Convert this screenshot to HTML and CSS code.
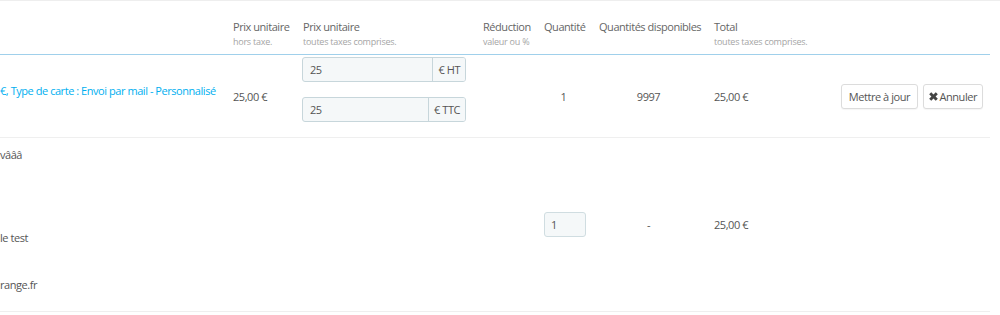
FILE: index.html
```html
<!DOCTYPE html>
<html lang="fr">
<head>
<meta charset="utf-8">
<title>Commande</title>
<link rel="stylesheet" href="styles.css">
</head>
<body>
<div class="panel">
  <table class="orders">
    <colgroup>
      <col class="c-name"><col class="c-ht"><col class="c-ttc"><col class="c-red">
      <col class="c-qty"><col class="c-stock"><col class="c-total"><col class="c-act">
    </colgroup>
    <thead>
      <tr>
        <th class="first"></th>
        <th>Prix unitaire<small>hors taxe.</small></th>
        <th>Prix unitaire<small>toutes taxes comprises.</small></th>
        <th>Réduction<small>valeur ou %</small></th>
        <th>Quantité<small>&nbsp;</small></th>
        <th>Quantités disponibles<small>&nbsp;</small></th>
        <th>Total<small>toutes taxes comprises.</small></th>
        <th></th>
      </tr>
    </thead>
    <tbody>
      <tr class="edit-row">
        <td class="first name"><a href="#">€, Type de carte : Envoi par mail - Personnalisé</a></td>
        <td>25,00 €</td>
        <td class="prices">
          <div class="input-group"><input type="text" value="25"><span class="addon">€ HT</span></div>
          <div class="input-group"><input type="text" value="25"><span class="addon">€ TTC</span></div>
        </td>
        <td></td>
        <td class="center">1</td>
        <td class="center">9997</td>
        <td>25,00 €</td>
        <td class="actions">
          <div class="btns">
            <button class="btn">Mettre à jour</button>
            <button class="btn btn-cancel"><svg class="ico" width="9" height="9" viewBox="0 0 10 10"><path d="M0.2 2.5L2.5 0.2 5 2.7 7.5 0.2 9.8 2.5 7.3 5 9.8 7.5 7.5 9.8 5 7.3 2.5 9.8 0.2 7.5 2.7 5z" fill="#444"/></svg>Annuler</button>
          </div>
        </td>
      </tr>
      <tr class="custom-row">
        <td class="first custom">
          <div class="line l1">vâââ</div>
          <div class="line l2">le test</div>
          <div class="line l3">range.fr</div>
        </td>
        <td></td>
        <td></td>
        <td></td>
        <td class="center"><input class="qty" type="text" value="1"></td>
        <td class="center">-</td>
        <td>25,00 €</td>
        <td></td>
      </tr>
    </tbody>
  </table>
</div>
</body>
</html>
```

FILE: styles.css
```css
html, body {
  margin: 0;
  padding: 0;
  background: #fff;
}

body {
  font-family: "Open Sans", "Liberation Sans", sans-serif;
  font-size: 11px;
  letter-spacing: -0.45px;
  line-height: 17px;
  color: #555;
  overflow: hidden;
}

.panel {
  border-top: 1px solid #eeeeee;
}

.orders {
  width: 990px;
  table-layout: fixed;
  border-collapse: separate;
  border-spacing: 0;
}

.c-name { width: 225px; }
.c-ht { width: 70px; }
.c-ttc { width: 180px; }
.c-red { width: 61px; }
.c-qty { width: 55px; }
.c-stock { width: 115px; }
.c-total { width: 124px; }
.c-act { width: 160px; }

.orders th {
  padding: 17px 8px 5px;
  vertical-align: bottom;
  text-align: left;
  font-weight: normal;
  color: #666;
  white-space: nowrap;
  border-bottom: 1px solid #a0d0eb;
}

.orders th small {
  display: block;
  font-size: 9px;
  letter-spacing: -0.25px;
  line-height: 14px;
  color: #a5a5a5;
}

.orders td {
  padding: 0 8px;
  vertical-align: middle;
  border-bottom: 1px solid #efefef;
  white-space: nowrap;
}

.orders .first {
  padding-left: 0;
}

.center {
  text-align: center;
}

.name {
  padding-bottom: 12px !important;
}

.name a {
  color: #00aff0;
  text-decoration: none;
}

.orders td.prices {
  padding: 2px 7px 0;
}

.input-group {
  display: flex;
  width: 164px;
  height: 25px;
  box-sizing: border-box;
  margin-bottom: 15px;
  border: 1px solid #c7d6db;
  border-radius: 3px;
  background: #f5f8f9;
  overflow: hidden;
}

.input-group input {
  flex: 1;
  min-width: 0;
  border: 0;
  background: transparent;
  padding: 0 7px;
  font: inherit;
  letter-spacing: inherit;
  color: #555;
}

.addon {
  padding: 0 5px;
  line-height: 23px;
  border-left: 1px solid #c7d6db;
  background: #f5f8f9;
  color: #555;
}

.orders td.actions {
  padding-right: 7px;
}

.btns {
  display: flex;
  justify-content: flex-end;
  gap: 5px;
}

.btn {
  display: flex;
  align-items: center;
  height: 25px;
  box-sizing: border-box;
  padding: 0 6.5px;
  border: 1px solid #dcdcdc;
  border-radius: 3px;
  background: #fff;
  font: inherit;
  letter-spacing: inherit;
  color: #555;
  box-shadow: 0 1px 1px rgba(0, 0, 0, 0.04);
}

.btn-cancel {
  padding: 0 5px;
}

.ico {
  margin-right: 2px;
}

.orders td.custom {
  vertical-align: top;
  padding-top: 8px;
  padding-bottom: 18px;
}

.line {
  height: 17px;
}

.l2 { margin-top: 66px; }
.l3 { margin-top: 30px; }

.qty {
  width: 42px;
  height: 25px;
  box-sizing: border-box;
  padding: 0 6px;
  border: 1px solid #d0dde1;
  border-radius: 3px;
  background: #f5f8f9;
  font: inherit;
  letter-spacing: inherit;
  color: #555;
  vertical-align: middle;
}
```
